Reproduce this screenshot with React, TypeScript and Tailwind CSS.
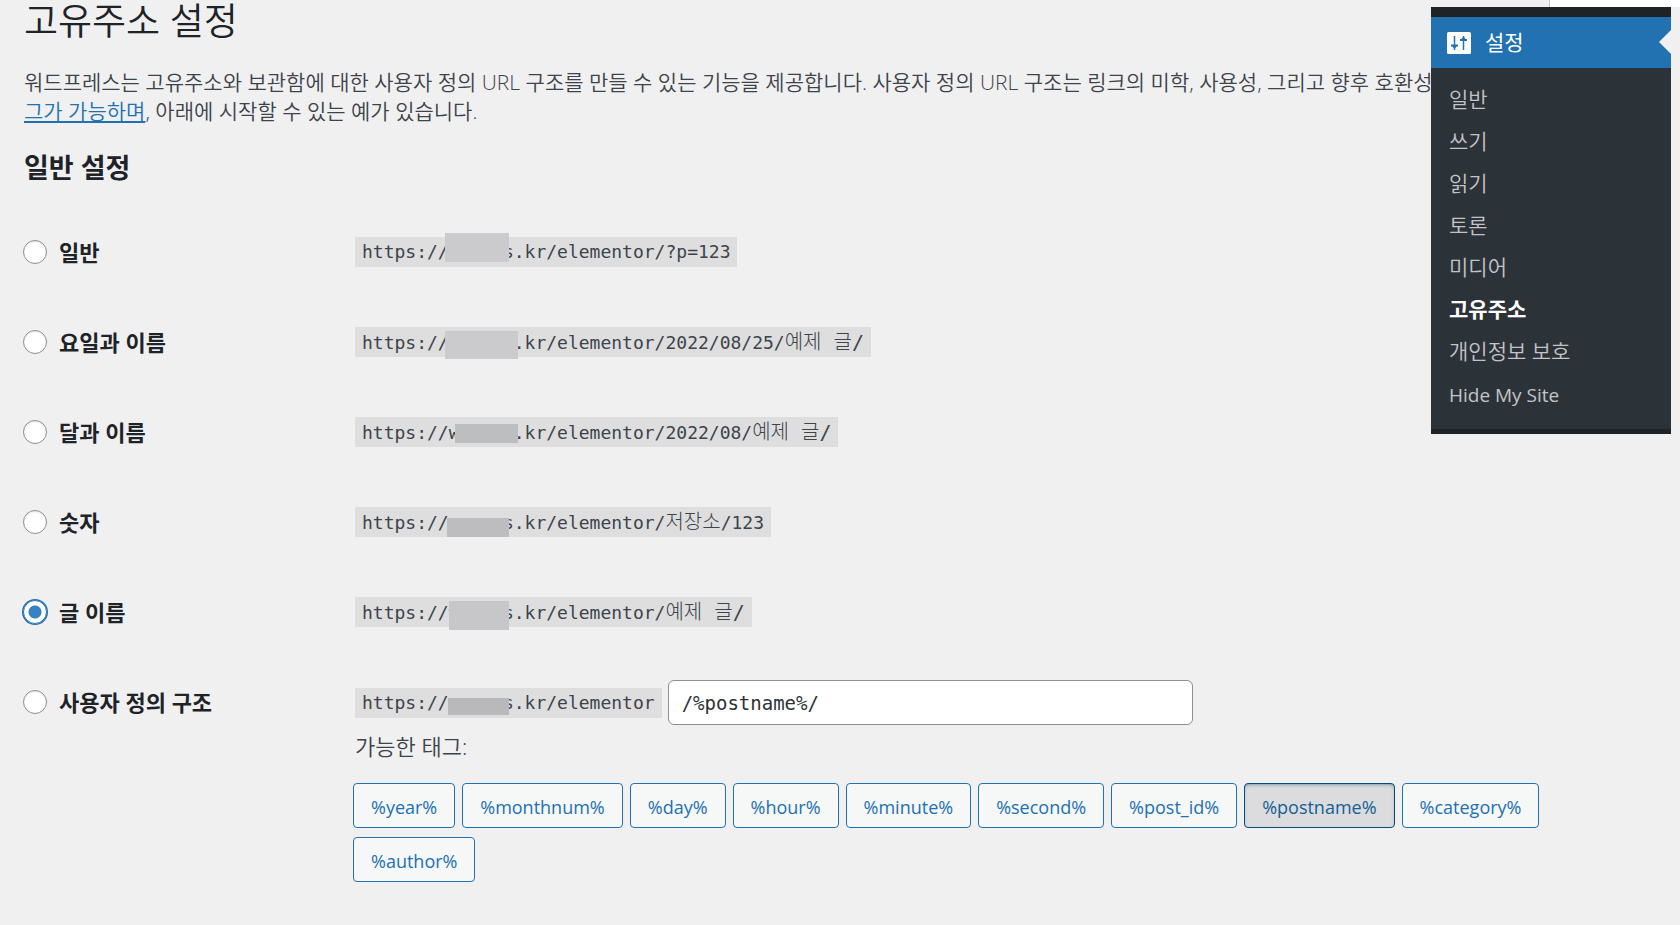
import { useState } from "react";
import clsx from "clsx";

const menuItems = [
  "일반",
  "쓰기",
  "읽기",
  "토론",
  "미디어",
  "고유주소",
  "개인정보 보호",
  "Hide My Site",
];

const tags = [
  "%year%",
  "%monthnum%",
  "%day%",
  "%hour%",
  "%minute%",
  "%second%",
  "%post_id%",
  "%postname%",
  "%category%",
  "%author%",
];

// mask: the block that hides the domain name in each sample url
const structures = [
  { id: "plain", label: "일반", host: " p   s", path: ".kr/elementor/?p=123", mask: "left-[90px] -top-1 h-[29px] w-16 bg-[#cbcbcd]" },
  { id: "day", label: "요일과 이름", host: "      ", path: ".kr/elementor/2022/08/25/", tail: "예제 글/", mask: "left-[90px] top-1 h-7 w-[73px] bg-[#cbcbcd]" },
  { id: "month", label: "달과 이름", host: "w     ", path: ".kr/elementor/2022/08/", tail: "예제 글/", mask: "left-[100px] top-[7px] h-[19px] w-[63px] bg-[#bdbec0]" },
  { id: "numeric", label: "숫자", host: "     s", path: ".kr/elementor/", tail: "저장소", end: "/123", mask: "left-[92px] top-[11px] h-[19px] w-[62px] bg-[#bdbdbf]" },
  { id: "name", label: "글 이름", host: "w    s", path: ".kr/elementor/", tail: "예제 글/", mask: "left-[94px] top-1 h-[29px] w-[60px] bg-[#c7c7c9]" },
  { id: "custom", label: "사용자 정의 구조", host: "     s", path: ".kr/elementor", mask: "left-[93px] top-[10px] h-[17px] w-[61px] bg-[#b9b9bb]" },
];

type Structure = (typeof structures)[number];

function SampleUrl({ item }: { item: Structure }) {
  return (
    <code className="relative inline-block h-[30px] whitespace-pre bg-[#dededf] px-[7px] font-['DejaVu_Sans_Mono','Noto_Sans_CJK_KR',monospace] text-[18px] leading-[30px] text-[#3c434a]">
      https://{item.host}
      {item.path}
      {item.tail && <span className="font-light text-[20px]">{item.tail}</span>}
      {item.end}
      <span className={clsx("absolute", item.mask)} />
    </code>
  );
}

function SettingsIcon() {
  return (
    <svg viewBox="0 0 24 22" className="h-[22px] w-6" aria-hidden="true">
      <rect width="24" height="22" rx="1.5" fill="#fff" />
      <g fill="none" stroke="#2271b1" strokeWidth="1.5">
        <path d="M7.500 4v14M16.500 4v14" />
        <path d="M4 13.500h7M13 8h7" strokeWidth="2" />
      </g>
      <path d="M5 14h5l-2.500 3zM14 7.500h5l-2.500-3z" fill="#2271b1" />
    </svg>
  );
}

function SettingsMenu() {
  return (
    <nav className="absolute right-[9px] top-[7px] w-60 border-t-10 border-b-5 border-[#1d2327] bg-[#2c3338] text-[21px]">
      <a href="#settings" className="relative flex h-[51px] items-center gap-[14px] bg-[#2271b1] pl-4 text-white">
        <SettingsIcon />
        설정
        <svg viewBox="0 0 12 24" className="absolute right-0 top-[13px] h-6 w-3" aria-hidden="true">
          <path d="M12 0v24L0 12z" fill="#f0f0f1" />
        </svg>
      </a>
      <ul className="pt-[10px] pb-[11px]">
        {menuItems.map((item) => (
          <li key={item}>
            <a
              href="#menu"
              className={clsx(
                "block px-[18px]",
                item === "고유주소" ? "font-bold text-white" : "text-[#c3c4c7]",
                item === "Hide My Site" ? "text-[19px] leading-[46px]" : "leading-[42px]",
                item !== "고유주소" && item !== "Hide My Site" && "font-[350]"
              )}
            >
              {item}
            </a>
          </li>
        ))}
      </ul>
    </nav>
  );
}

export default function App() {
  const [selected, setSelected] = useState("name");
  const [custom, setCustom] = useState("/%postname%/");

  return (
    <div className="relative min-h-screen overflow-hidden bg-[#f0f0f1] font-['Open_Sans','Noto_Sans_CJK_KR',sans-serif] text-[#3c434a]">
      {/* Screen options tab */}
      <div className="absolute right-0 top-0 h-[7px] w-[131px] border-l border-[#c3c4c7] bg-white" />

      <main className="px-[23px]">
        <h1 className="pl-px text-[37px] font-[350] leading-[42px] text-[#1d2327]">고유주소 설정</h1>
        <p className="mt-[26px] whitespace-nowrap pl-px text-[21px] font-[350] leading-[29px]">
          워드프레스는 고유주소와 보관함에 대한 사용자 정의 URL 구조를 만들 수 있는 기능을 제공합니다. 사용자 정의 URL 구조는 링크의 미학, 사용성, 그리고 향후 호환성
          <br />
          <a href="#tags" className="text-[#2271b1] underline underline-offset-2">그가 가능하며</a>, 아래에 시작할 수 있는 예가 있습니다.
        </p>
        <h2 className="mt-6 pl-px text-[27px] font-bold leading-[36px] text-[#1d2327]">일반 설정</h2>

        <table className="mt-[21px] w-full">
          <tbody>
            {structures.map((item) => (
              <tr key={item.id} className="align-top">
                <th scope="row" className="h-[90px] w-[332px] pt-[30px] text-left">
                  <label className="flex h-[30px] items-center gap-3 text-[22px] font-bold text-[#1d2327]">
                    <input
                      type="radio"
                      name="structure"
                      checked={selected === item.id}
                      onChange={() => setSelected(item.id)}
                      className="size-6 appearance-none rounded-full border border-[#8c8f94] bg-white shadow-[inset_0_1px_2px_rgba(0,0,0,0.1)] checked:border-[#2271b1] checked:bg-[radial-gradient(circle,#3582c4_0_6px,#fff_7px)] checked:shadow-[0_0_0_1px_#2271b1]"
                    />
                    {item.label}
                  </label>
                </th>
                <td className="pt-[30px]">
                  {item.id !== "custom" && <SampleUrl item={item} />}
                  {item.id === "custom" && (
                    <>
                      <div className="-mt-[7px] flex items-center gap-1.5">
                        <SampleUrl item={item} />
                        <input
                          type="text"
                          aria-label="사용자 정의 구조"
                          value={custom}
                          onChange={(e) => setCustom(e.target.value)}
                          className="h-[45px] w-[525px] rounded-md border border-[#8c8f94] bg-white px-[13px] font-['DejaVu_Sans_Mono',monospace] text-[19px] text-[#2c3338]"
                        />
                      </div>
                      <p className="mt-[6px] text-[22px] font-[350] leading-[30px]">가능한 태그:</p>
                      <ul className="-ml-0.5 mt-[22px] flex max-w-[1220px] flex-wrap gap-x-[7px] gap-y-[9px]">
                        {tags.map((tag) => (
                          <li key={tag}>
                            <button
                              type="button"
                              className={clsx(
                                "h-[45px] rounded border px-[17px] pt-1 text-[18px]",
                                custom.includes(tag)
                                  ? "border-[#0a4b78] bg-[#dcdcde] text-[#135e96] shadow-[inset_0_2px_5px_-3px_#0a4b78]"
                                  : "border-[#2271b1] bg-[#f6f7f7] text-[#2271b1]"
                              )}
                            >
                              {tag}
                            </button>
                          </li>
                        ))}
                      </ul>
                    </>
                  )}
                </td>
              </tr>
            ))}
          </tbody>
        </table>
      </main>

      <SettingsMenu />
    </div>
  );
}
